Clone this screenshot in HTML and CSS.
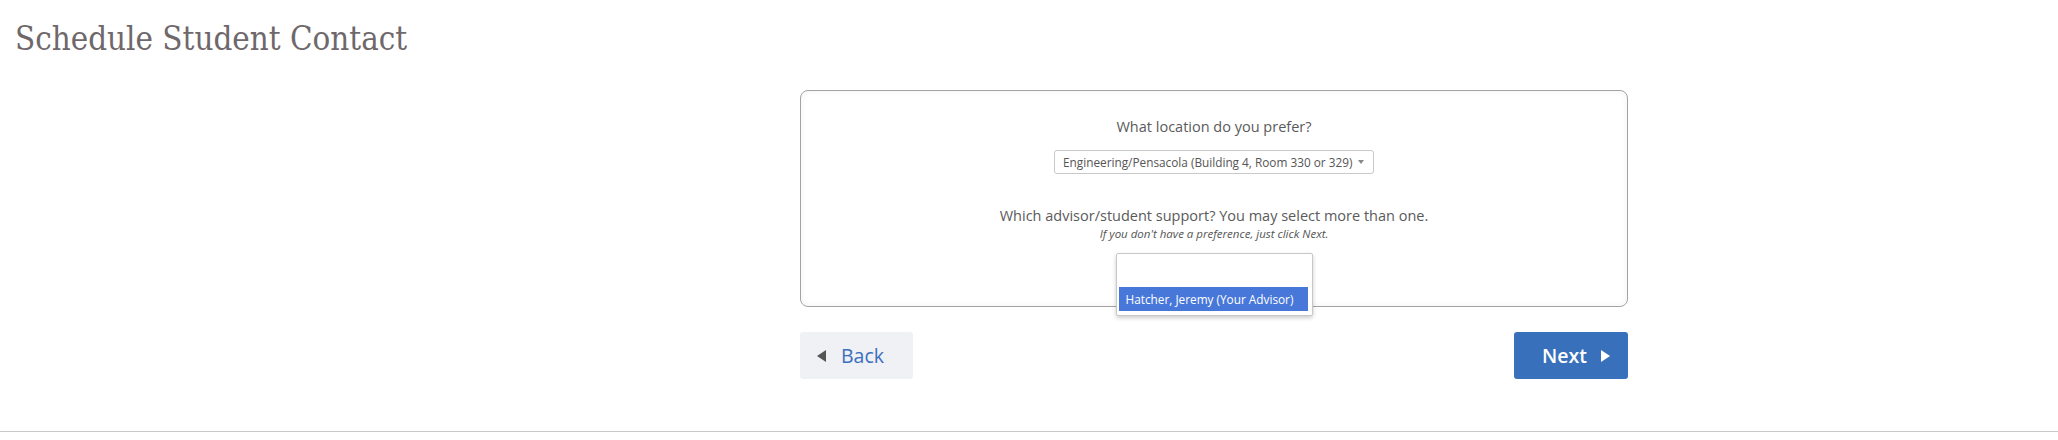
FILE: index.html
```html
<!DOCTYPE html>
<html lang="en">
<head>
<meta charset="utf-8">
<title>Schedule Student Contact</title>
<link rel="stylesheet" href="styles.css">
</head>
<body>
<div class="page">
  <h1 class="title">Schedule Student Contact</h1>
  <div class="main">
    <div class="wizard">
      <div class="card">
        <div class="question">What location do you prefer?</div>
        <div class="select">
          <span class="select-text">Engineering/Pensacola (Building 4, Room 330 or 329)</span>
          <span class="select-caret"></span>
        </div>
        <div class="question q2">Which advisor/student support? You may select more than one.</div>
        <div class="hint">If you don't have a preference, just click Next.</div>
        <div class="listbox">
          <div class="option selected">Hatcher, Jeremy (Your Advisor)</div>
        </div>
      </div>
      <div class="actions">
        <button class="btn btn-back"><span class="tri tri-left"></span>Back</button>
        <button class="btn btn-next">Next<span class="tri tri-right"></span></button>
      </div>
    </div>
  </div>
  <div class="footer-line"></div>
</div>
</body>
</html>
```
FILE: styles.css
```css
html, body {
  margin: 0;
  padding: 0;
  background: #ffffff;
}
.page {
  width: 2058px;
  height: 440px;
  overflow: hidden;
}
.title {
  margin: 0;
  padding: 19px 0 0 15px;
  height: 39px;
  font-family: "DejaVu Serif", "Liberation Serif", serif;
  font-stretch: condensed;
  font-weight: normal;
  font-size: 32.8px;
  line-height: 40px;
  color: #6f686b;
}
.main {
  padding-left: 800px;
  padding-top: 32px;
}
.wizard {
  width: 828px;
}
.card {
  box-sizing: border-box;
  height: 217px;
  border: 1px solid #a3a3a3;
  border-radius: 8px;
  box-shadow: inset 0 0 6px rgba(0,0,0,0.06);
  display: flex;
  flex-direction: column;
  align-items: center;
  padding-top: 25px;
  font-family: "Open Sans", "Liberation Sans", sans-serif;
  color: #5a5a5a;
}
.card > * {
  flex-shrink: 0;
}
.question {
  font-size: 14.5px;
  line-height: 22px;
}
.select {
  margin-top: 12px;
  box-sizing: border-box;
  width: 320px;
  height: 24px;
  border: 1px solid #c9c9c9;
  border-radius: 3px;
  display: flex;
  align-items: center;
  padding: 0 0 0 8px;
  font-size: 11.8px;
  color: #555;
}
.select-text {
  flex: 1;
}
.select-caret {
  width: 0;
  height: 0;
  border-left: 3.5px solid transparent;
  border-right: 3.5px solid transparent;
  border-top: 4px solid #888;
  margin-right: 9px;
}
.q2 {
  margin-top: 31px;
}
.hint {
  font-size: 11.5px;
  line-height: 14px;
  font-style: italic;
  color: #555;
}
.listbox {
  margin-top: 12px;
  box-sizing: border-box;
  width: 197px;
  height: 63px;
  background: #fff;
  border: 1px solid #c8c8c8;
  border-radius: 2px;
  box-shadow: 0 2px 4px rgba(0,0,0,0.2);
  padding: 33px 4px 0 2px;
  position: relative;
  z-index: 2;
}
.option {
  height: 24px;
  line-height: 24px;
  font-size: 11.8px;
  padding-left: 7px;
}
.option.selected {
  background: #4877da;
  color: #fff;
}
.actions {
  margin-top: 25px;
  display: flex;
  justify-content: space-between;
}
.btn {
  height: 47px;
  border: none;
  border-radius: 3px;
  font-family: "Open Sans", "Liberation Sans", sans-serif;
  font-size: 19.5px;
  display: flex;
  align-items: center;
  padding: 0;
}
.btn-back {
  width: 113px;
  background: #eff1f4;
  color: #3b6fbf;
  padding-left: 17px;
}
.btn-next {
  width: 114px;
  background: #3870bb;
  color: #fff;
  font-weight: 600;
  padding-left: 28px;
}
.tri {
  width: 0;
  height: 0;
  border-top: 6px solid transparent;
  border-bottom: 6px solid transparent;
}
.tri-left {
  border-right: 9px solid #555;
  margin-right: 15px;
}
.tri-right {
  border-left: 9px solid #fff;
  margin-left: 14px;
}
.footer-line {
  margin-top: 52px;
  height: 1px;
  background: #c9c9c9;
}
```
